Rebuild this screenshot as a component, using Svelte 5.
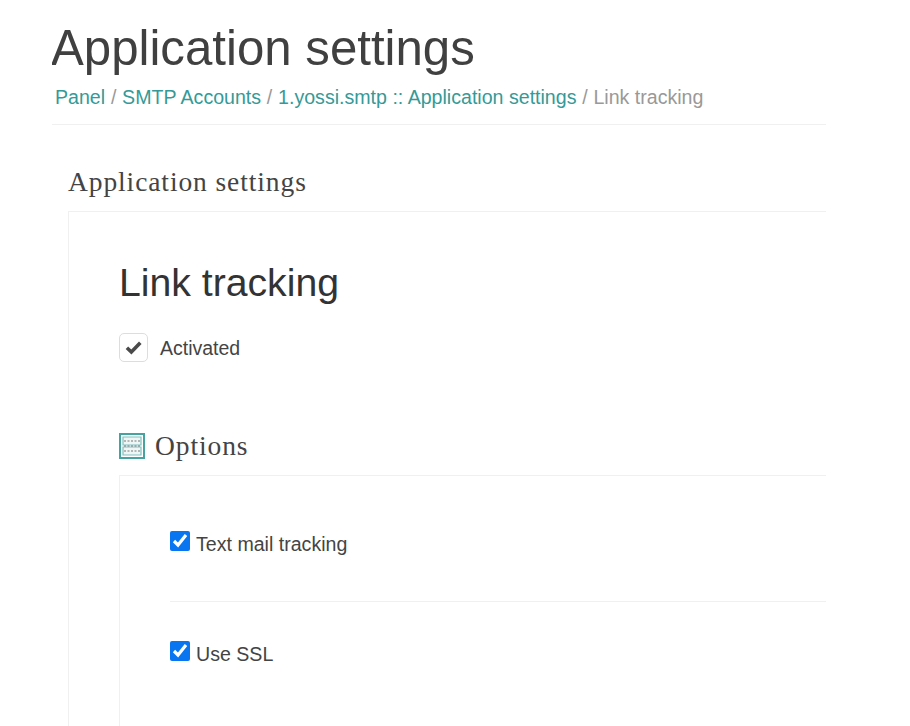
<script>
  // settings page for one SMTP account
  let crumbs = ['Panel', 'SMTP Accounts', '1.yossi.smtp :: Application settings']
  let options = $state([
    { label: 'Text mail tracking', on: true },
    { label: 'Use SSL', on: true }
  ])
  let activated = $state(true)
</script>

<div class="page">
  <header class="head">
    <h1>Application settings</h1>
    <nav class="crumbs">
      {#each crumbs as c}
        <a href="#top">{c}</a><span class="sep">/</span>
      {/each}<span class="current">Link tracking</span>
    </nav>
  </header>

  <section class="panel">
    <h2 class="legend">Application settings</h2>
    <div class="panel-body">
      <h3 class="title">Link tracking</h3>

      <label class="activated">
        <button class="toggle" type="button" aria-pressed={activated} onclick={() => (activated = !activated)}>
          {#if activated}
            <svg viewBox="0 0 16 14" width="17" height="15">
              <path d="M1.8 7.2 L6 11.2 L14.4 2.6" fill="none" stroke="#4a4a4a" stroke-width="3.4" />
            </svg>
          {/if}
        </button>
        <span>Activated</span>
      </label>

      <h2 class="legend options">
        <svg class="grid-icon" viewBox="0 0 26 26" width="26" height="26">
          <rect x="1" y="1" width="24" height="24" fill="#fff" stroke="#45a3a0" stroke-width="2" />
          <path d="M4 4h18v8H4zM4 14h18v8H4z" fill="#eef7f6" stroke="#7fc0bd" stroke-width="1.2" />
          <path d="M5 8h16M5 18h16M5 13h16" stroke="#777" stroke-width="1" stroke-dasharray="2 1.5" />
        </svg>
        Options
      </h2>

      <div class="fields">
        {#each options as o, i}
          <label class="option" class:ruled={i > 0}>
            <input type="checkbox" bind:checked={o.on} />
            <span>{o.label}</span>
          </label>
        {/each}
      </div>
    </div>
  </section>
</div>

<style>
  :global(body) {
    margin: 0;
    background: #fff;
    overflow: hidden;
    font-family: "Liberation Sans", Arial, sans-serif;
    color: #444;
  }

  .page {
    width: 774px;
    margin-left: 52px;
    height: 726px;
    overflow: hidden;
  }

  .head {
    padding-top: 20px;
    height: 104px;
    border-bottom: 1px solid #f0f0f0;
  }

  h1 {
    margin: 0 0 0 -1px;
    font-size: 49.2px;
    font-weight: 400;
    line-height: 56px;
    color: #404040;
  }

  .crumbs {
    margin: 9px 0 0 3px;
    font-size: 19.6px;
    line-height: 24px;
    white-space: nowrap;
    color: #999;
  }

  .crumbs a {
    color: #359a97;
    text-decoration: none;
  }

  .sep {
    margin: 0 5.75px;
  }

  .panel {
    margin: 36px 0 0 16px;
  }

  .legend {
    margin: 0;
    padding-bottom: 8px;
    font-family: "Liberation Serif", serif;
    font-size: 27.5px;
    font-weight: 400;
    line-height: 42px;
    letter-spacing: 0.9px;
    color: #444;
  }

  .panel-body {
    border-left: 1px solid #f0f0f0;
    border-top: 1px solid #f0f0f0;
    padding: 44px 0 0 50px;
  }

  .title {
    margin: 0;
    font-size: 39.2px;
    font-weight: 400;
    line-height: 54px;
    color: #333;
  }

  .activated {
    display: flex;
    align-items: center;
    gap: 12px;
    margin-top: 21px;
    font-size: 19.5px;
    line-height: 29px;
  }

  .activated span {
    margin-top: 3px;
  }

  .toggle {
    width: 29px;
    height: 29px;
    padding: 0;
    display: flex;
    align-items: center;
    justify-content: center;
    background: #fff;
    border: 1px solid #ddd;
    border-radius: 5px;
  }

  .options {
    display: flex;
    align-items: center;
    gap: 10px;
    margin-top: 62px;
  }

  .fields {
    border-left: 1px solid #f0f0f0;
    border-top: 1px solid #f0f0f0;
    padding: 0 0 80px 50px;
  }

  .option {
    display: flex;
    align-items: flex-start;
    gap: 6px;
    padding-top: 55px;
    height: 70px;
    font-size: 19.6px;
    line-height: 24px;
  }

  .option.ruled {
    border-top: 1px solid #f0f0f0;
    padding-top: 39px;
  }

  .option span {
    margin-top: 1px;
  }

  .option input {
    width: 19.5px;
    height: 19.5px;
    margin: 0 0.5px 0 0;
    accent-color: #0a75f0;
  }
</style>
